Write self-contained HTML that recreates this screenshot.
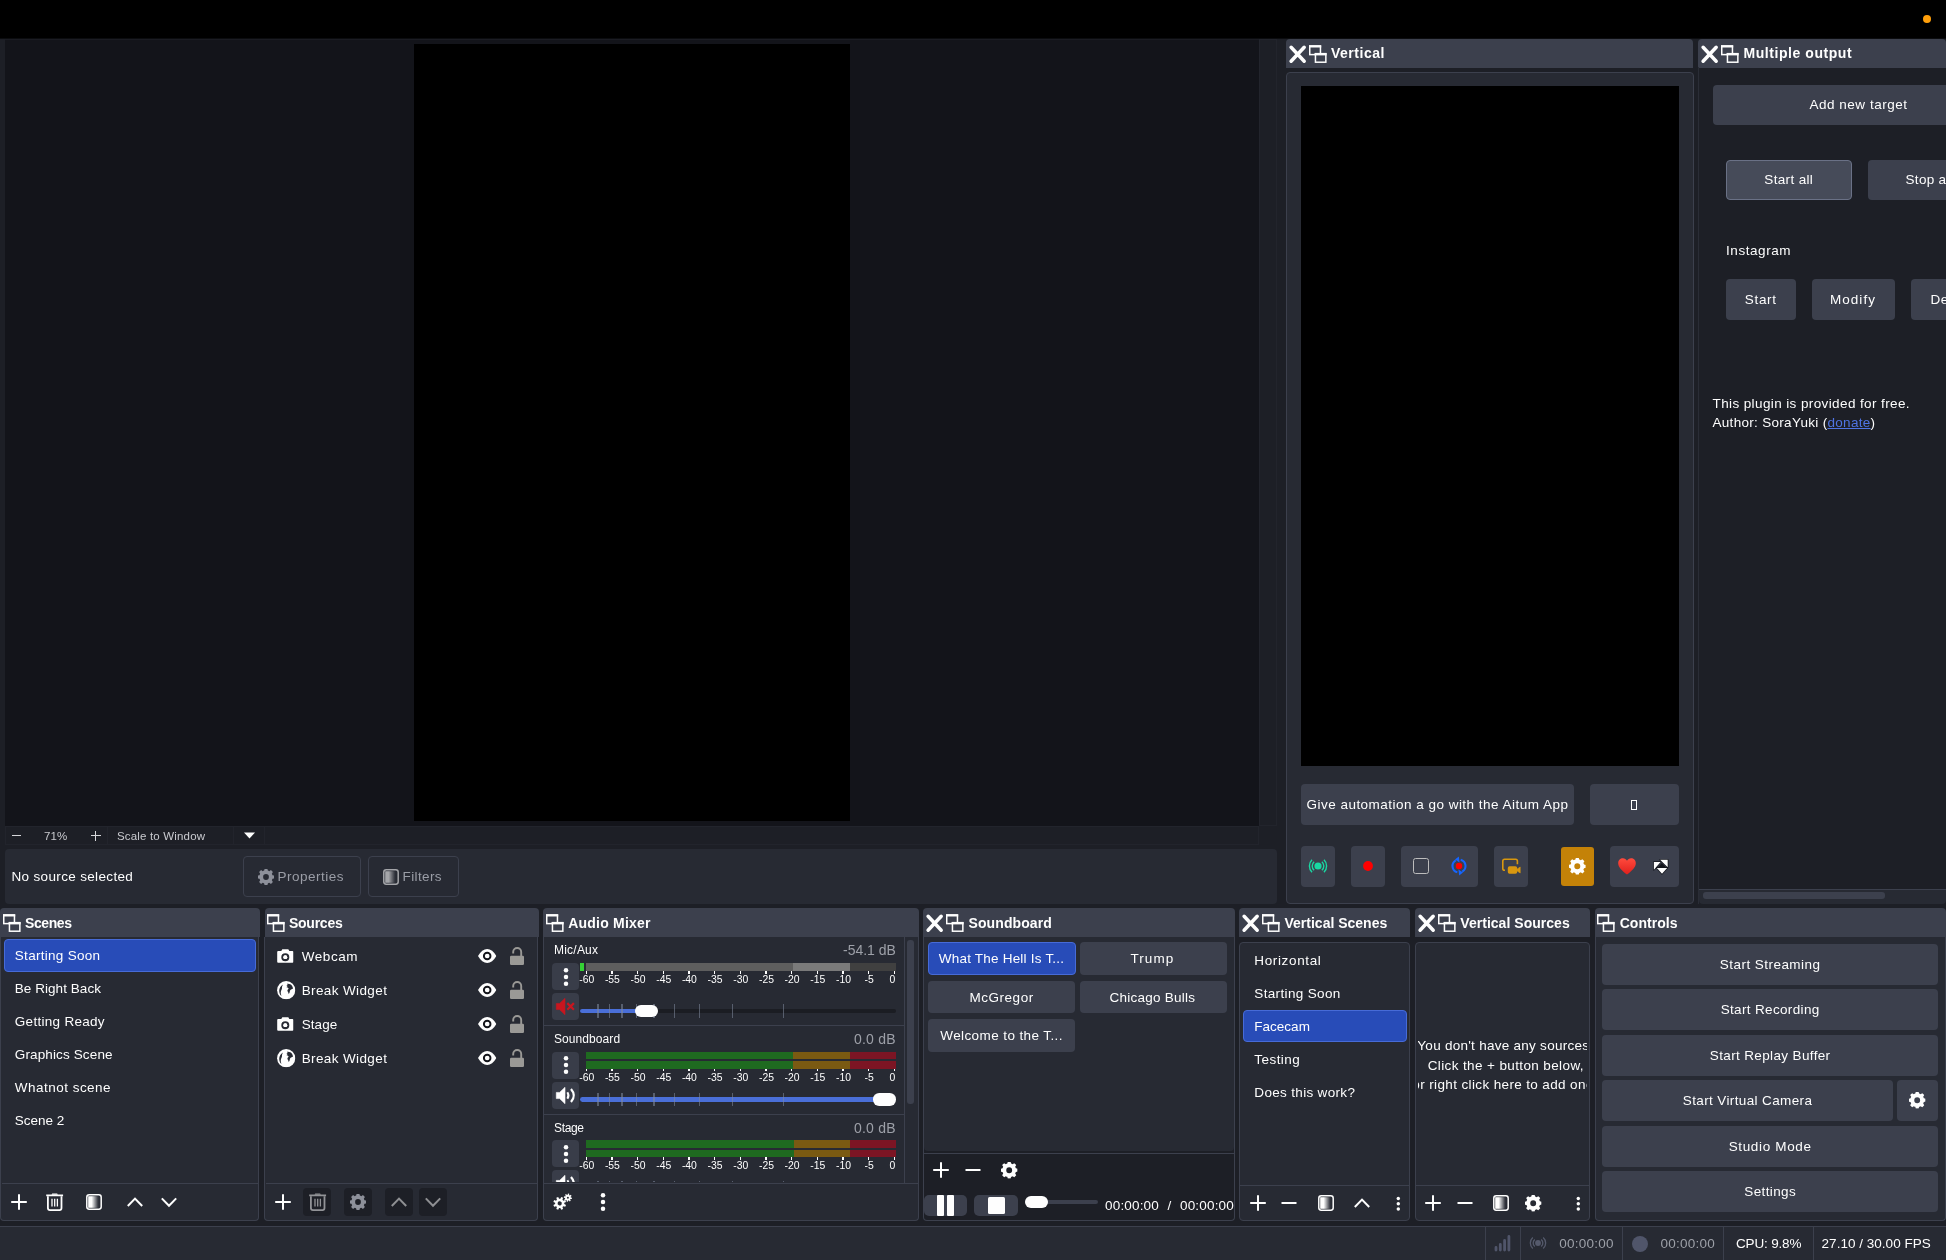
<!DOCTYPE html>
<html lang="en">
<head>
<meta charset="utf-8">
<title>OBS Studio</title>
<style>
*{box-sizing:border-box;margin:0;padding:0}
html,body{width:1946px;height:1260px;overflow:hidden;background:#1d1f26}
body{position:relative;font-family:"Liberation Sans","DejaVu Sans",sans-serif;font-size:13.5px;color:#fefefe;letter-spacing:.2px;-webkit-font-smoothing:antialiased}
.a{position:absolute}
.t{will-change:opacity;position:absolute;white-space:nowrap;line-height:20px;height:20px}
.title{position:absolute;background:#3c404d;border-radius:4px 4px 0 0;height:28.5px}
.title .t{font-weight:bold;top:4px;font-size:14px;letter-spacing:.45px}
.frame{position:absolute;background:#272a33;border:1px solid #3c404d}
.btn{position:absolute;background:#3c404d;border-radius:4px;text-align:center;white-space:nowrap}
.sel{position:absolute;background:#284cb8;border:1px solid #476bd7;border-radius:4px}
.hl{position:absolute;height:1px;background:#3c404d}
.vl{position:absolute;width:1px;background:#3c404d}
svg{position:absolute;overflow:visible}
.ic{fill:#fefefe}
.grey{color:#9da0a8}
</style>
</head>
<body>
<svg width="0" height="0" style="position:absolute">
<defs>
<symbol id="float" viewBox="0 -0.2 18 18">
 <rect x="0.75" y="0.9" width="10.7" height="8.5" fill="none" stroke="#fefefe" stroke-width="1.5"/>
 <rect x="0" y="0" width="12.2" height="2.3" fill="#fefefe"/>
 <rect x="6.45" y="8.6" width="10.4" height="8.4" fill="#3c404d" stroke="#fefefe" stroke-width="1.5"/>
 <rect x="5.7" y="7.7" width="11.9" height="2.5" fill="#fefefe"/>
</symbol>
<symbol id="close" viewBox="0 0 17 18" overflow="visible">
 <path d="M2.1 2.3L15.2 16.2M15.2 2.3L2.1 16.2" stroke="#fefefe" stroke-width="3.5" stroke-linecap="round" fill="none"/>
</symbol>
<symbol id="plus" viewBox="0 0 16 16"><path d="M8 0.2V15.8M0.2 8H15.8" stroke="#fefefe" stroke-width="2" fill="none"/></symbol>
<symbol id="minus" viewBox="0 0 16 16"><path d="M0.5 8H15.5" stroke="#fefefe" stroke-width="2" fill="none"/></symbol>
<symbol id="up" viewBox="0 0 16 16"><path d="M0.8 12L8 4.6L15.2 12" stroke="#fefefe" stroke-width="2" fill="none"/></symbol>
<symbol id="down" viewBox="0 0 16 16"><path d="M0.8 4.4L8 11.8L15.2 4.4" stroke="#fefefe" stroke-width="2" fill="none"/></symbol>
<symbol id="kebab" viewBox="0 0 4 16"><circle cx="2" cy="2.6" r="1.7" fill="#fefefe"/><circle cx="2" cy="8" r="1.7" fill="#fefefe"/><circle cx="2" cy="13.4" r="1.7" fill="#fefefe"/></symbol>
<symbol id="trash" viewBox="0 0 17.4 18">
 <path d="M0.2 2.4H17.2" stroke="#fefefe" stroke-width="1.7" fill="none"/>
 <path d="M5.6 1.8L6.2 0.5H11.2L11.8 1.8Z" fill="#fefefe"/>
 <path d="M1.9 3.2V15Q1.9 17.1 4 17.1H13.4Q15.5 17.1 15.5 15V3.2" stroke="#fefefe" stroke-width="1.8" fill="none"/>
 <path d="M6 5.8V13.4M8.7 5.8V13.4M11.4 5.8V13.4" stroke="#fefefe" stroke-width="1.3" fill="none"/>
</symbol>
<linearGradient id="fg" x1="0" x2="1" y1="0" y2="0"><stop offset="0" stop-color="#fefefe"/><stop offset="0.3" stop-color="#fefefe"/><stop offset="0.85" stop-color="#fefefe" stop-opacity="0.05"/><stop offset="1" stop-color="#fefefe" stop-opacity="0"/></linearGradient>
<symbol id="filter" viewBox="0 0 16 16">
 <rect x="2.2" y="2.2" width="11.6" height="11.6" fill="url(#fg)"/>
 <rect x="0.8" y="0.8" width="14.4" height="14.4" rx="2.4" fill="none" stroke="#fefefe" stroke-width="1.5"/>
</symbol>
<symbol id="gear" viewBox="-10 -10 20 20">
 <path fill-rule="evenodd" d="M-1.7 -9.6H1.7L2.3 -7.2A7.4 7.4 0 0 1 4.1 -6.4L6.2 -7.7L8.6 -5.3L7.3 -3.2A7.4 7.4 0 0 1 8.1 -1.4L10.5 -0.8V2.6L8.1 3.2A7.4 7.4 0 0 1 7.3 5L8.6 7.1L6.2 9.5L4.1 8.2A7.4 7.4 0 0 1 2.3 9L1.7 11.4H-1.7L-2.3 9A7.4 7.4 0 0 1 -4.1 8.2L-6.2 9.5L-8.6 7.1L-7.3 5A7.4 7.4 0 0 1 -8.1 3.2L-10.5 2.6V-0.8L-8.1 -1.4A7.4 7.4 0 0 1 -7.3 -3.2L-8.6 -5.3L-6.2 -7.7L-4.1 -6.4A7.4 7.4 0 0 1 -2.3 -7.2ZM0 -2.7A3.6 3.6 0 1 0 0 4.5A3.6 3.6 0 1 0 0 -2.7Z" transform="translate(0 -0.9)"/>
</symbol>
<symbol id="cam" viewBox="0 0 17 14">
 <path fill-rule="evenodd" d="M1.2 2H4.4L5.4 0.2H11.6L12.6 2H15.8Q16.8 2 16.8 3V13Q16.8 14 15.8 14H1.2Q0.2 14 0.2 13V3Q0.2 2 1.2 2ZM8.5 4.1A4.1 4.1 0 1 0 8.5 12.3A4.1 4.1 0 1 0 8.5 4.1ZM8.5 6.2A2 2 0 1 1 8.5 10.2A2 2 0 1 1 8.5 6.2Z" fill="#fefefe"/>
 <circle cx="8.5" cy="8.2" r="2" fill="#fefefe"/>
</symbol>
<symbol id="globe" viewBox="-9.2 -9.2 18.4 18.4">
 <circle r="9.1" fill="#fefefe"/>
 <path d="M-3.2 -5.6C-5.6 -4.2 -7 -1.8 -7 0.6C-7 2.8 -6.2 4.6 -4.8 5.8C-5 4.4 -5.6 3.4 -5.4 1.8C-5.2 0 -4 -0.8 -4.2 -2.4C-4.3 -3.6 -3.6 -4.6 -3.2 -5.6Z" fill="#272a33"/>
 <path d="M0.6 -6.4C2 -6.8 3.4 -6.4 4.6 -5.6C5.8 -4.6 6.6 -3.4 6.8 -1.8C6 -1.2 5 -1 4.2 -0.2C3.4 0.6 3.8 1.8 3.2 2.8C2.8 3.6 2.2 4.2 2.2 3C2.2 1.8 1.2 1.6 1.2 0.4C1.2 -0.6 2.2 -1 2.4 -2C1.6 -2.6 0.6 -2.4 0.2 -3.2C-0.2 -4.2 0.8 -4.8 1.6 -5.2C1.2 -5.6 0.8 -6 0.6 -6.4Z" fill="#272a33"/>
 <circle cx="0.4" cy="-3.4" r="0.7" fill="#fefefe"/>
</symbol>
<symbol id="eye" viewBox="-9.2 -7 18.4 14">
 <path d="M-9.2 0C-6.6 -4.6 -3.4 -7 0 -7C3.4 -7 6.6 -4.6 9.2 0C6.6 4.6 3.4 7 0 7C-3.4 7 -6.6 4.6 -9.2 0Z" fill="#fefefe"/>
 <circle r="3.3" fill="none" stroke="#14151b" stroke-width="1.9"/>
</symbol>
<symbol id="lock" viewBox="0 0 14 18">
 <rect x="0" y="8.8" width="14" height="9.2" rx="1.2" fill="#9a9996"/>
 <path d="M3.2 6.4V5A4 4 0 0 1 11.2 5V9.2" stroke="#9a9996" stroke-width="1.9" fill="none"/>
</symbol>
<symbol id="cogs" viewBox="0 0 20 16" overflow="visible">
 <path fill-rule="evenodd" d="M4.46 -1.14L6.42 -1.02L6.42 1.02L4.46 1.14L3.96 2.34L5.26 3.82L3.82 5.26L2.34 3.96L1.14 4.46L1.02 6.42L-1.02 6.42L-1.14 4.46L-2.34 3.96L-3.82 5.26L-5.26 3.82L-3.96 2.34L-4.46 1.14L-6.42 1.02L-6.42 -1.02L-4.46 -1.14L-3.96 -2.34L-5.26 -3.82L-3.82 -5.26L-2.34 -3.96L-1.14 -4.46L-1.02 -6.42L1.02 -6.42L1.14 -4.46L2.34 -3.96L3.82 -5.26L5.26 -3.82L3.96 -2.34ZM0 -2.1A2.1 2.1 0 1 0 0 2.1A2.1 2.1 0 1 0 0 -2.1Z" transform="translate(6.7 9.4) rotate(22.5)" fill="#fefefe"/>
 <path fill-rule="evenodd" d="M2.81 -0.72L4.05 -0.64L4.05 0.64L2.81 0.72L2.50 1.48L3.32 2.41L2.41 3.32L1.48 2.50L0.72 2.81L0.64 4.05L-0.64 4.05L-0.72 2.81L-1.48 2.50L-2.41 3.32L-3.32 2.41L-2.50 1.48L-2.81 0.72L-4.05 0.64L-4.05 -0.64L-2.81 -0.72L-2.50 -1.48L-3.32 -2.41L-2.41 -3.32L-1.48 -2.50L-0.72 -2.81L-0.64 -4.05L0.64 -4.05L0.72 -2.81L1.48 -2.50L2.41 -3.32L3.32 -2.41L2.50 -1.48ZM0 -1.0A1.0 1.0 0 1 0 0 1.0A1.0 1.0 0 1 0 0 -1.0Z" transform="translate(14.9 3.7) rotate(10)" fill="#fefefe"/>
</symbol>
<symbol id="spk" viewBox="0 0 20 17" overflow="visible">
 <path d="M0.3 5.4H3.6L9 0.3V16.7L3.6 11.6H0.3Z" fill="#fefefe" stroke="#fefefe" stroke-width=".6" stroke-linejoin="round"/>
 <path d="M11.4 5.2Q13.6 8.5 11.4 11.8" stroke="#fefefe" stroke-width="2" fill="none"/>
 <path d="M15 2Q20.6 8.5 15 15" stroke="#fefefe" stroke-width="2.2" fill="none"/>
</symbol>
<symbol id="mute" viewBox="0 0 20 17" overflow="visible">
 <path d="M0.3 5.4H3.6L9 0.3V16.7L3.6 11.6H0.3Z" fill="#c8161f" stroke="#c8161f" stroke-width=".6" stroke-linejoin="round"/>
 <path d="M11.3 5.1L17.9 11.7M17.9 5.1L11.3 11.7" stroke="#c8161f" stroke-width="2.2" fill="none"/>
</symbol>
<symbol id="kb" viewBox="-3 -10 6 20" overflow="visible"><circle cy="-6.85" r="2.25" fill="#fefefe"/><circle r="2.25" fill="#fefefe"/><circle cy="6.85" r="2.25" fill="#fefefe"/></symbol>
</defs>
</svg>

<!-- top black bar -->
<div class="a" style="left:0;top:0;width:1946px;height:38px;background:#000"></div>
<div class="a" style="left:0;top:38px;width:1946px;height:1px;background:#0b0c0f"></div>
<div class="a" style="left:1922.5px;top:14.5px;width:8.4px;height:8.4px;border-radius:50%;background:#ff9f0a"></div>

<!-- main preview -->
<div class="a" id="pv" style="left:5px;top:39px;width:1254px;height:787px;background:#13141a;border-top:1px solid #1b1c23"></div>
<div class="a" style="left:414px;top:44px;width:436px;height:776.6px;background:#000"></div>
<!-- preview scrollbars/status row -->
<div class="a" style="left:1259px;top:39px;width:18px;height:787px;background:#1d1f26;border:1px solid #22242c"></div>
<div class="a" style="left:5px;top:826px;width:1254px;height:19px;background:#1d1f26;border:1px solid #22242c"></div>

<!-- preview zoom bar -->
<div class="vl" style="left:107px;top:827px;height:17px;background:#22242c"></div>
<div class="vl" style="left:233px;top:827px;height:17px;background:#22242c"></div>
<div class="vl" style="left:264px;top:827px;height:17px;background:#22242c"></div>
<div class="a" style="left:11.5px;top:835px;width:9px;height:1.4px;background:#d6d7da"></div>
<div class="t" style="left:44px;top:826px;font-size:11.5px;color:#c9cacf;letter-spacing:.1px">71%</div>
<div class="a" style="left:90.5px;top:835px;width:10px;height:1.4px;background:#d6d7da"></div>
<div class="a" style="left:94.8px;top:830.7px;width:1.4px;height:10px;background:#d6d7da"></div>
<div class="t" style="left:117px;top:826px;font-size:11.5px;color:#c9cacf;letter-spacing:0.17px">Scale to Window</div>
<svg style="left:244px;top:832px" width="11" height="7" viewBox="0 0 11 7"><path d="M0 0.4H11L5.5 6.6Z" fill="#fefefe"/></svg>

<!-- context bar -->
<div class="a" style="left:5px;top:849px;width:1272px;height:55px;background:#272a33;border-radius:4px"></div>
<div class="t" style="left:11.5px;top:866.5px;letter-spacing:0.34px">No source selected</div>
<div class="a" style="left:243px;top:856px;width:117.5px;height:40.5px;border:1px solid #3c404d;border-radius:4px"></div>
<svg style="left:257.5px;top:868.5px" width="16" height="16"><use href="#gear" fill="#8d909a"/></svg>
<div class="t" style="left:277.5px;top:866.5px;color:#9a9da6;letter-spacing:0.51px">Properties</div>
<div class="a" style="left:367.5px;top:856px;width:91px;height:40.5px;border:1px solid #3c404d;border-radius:4px"></div>
<svg style="left:383px;top:868.5px;opacity:.58" width="16" height="16"><use href="#filter"/></svg>
<div class="t" style="left:402.5px;top:866.5px;color:#9a9da6;letter-spacing:0.39px">Filters</div>

<!-- Vertical dock -->
<div class="title" style="left:1286px;top:39px;width:407px"></div>
<svg style="left:1289px;top:45px" width="17" height="18"><use href="#close"/></svg>
<svg style="left:1309px;top:45px" width="18" height="18"><use href="#float"/></svg>
<div class="title" style="left:1331px;top:39px;width:100px;background:none"><div class="t" style="left:0;letter-spacing:0.51px">Vertical</div></div>
<div class="frame" style="left:1286px;top:72px;width:407.5px;height:832px;border-radius:4px"></div>
<div class="a" style="left:1301px;top:85.5px;width:378px;height:680.5px;background:#000"></div>
<div class="btn" style="left:1301px;top:784px;width:273px;height:41px"><div class="t" style="left:5.5px;top:10.5px;letter-spacing:0.48px">Give automation a go with the Aitum App</div></div>
<div class="btn" style="left:1589.5px;top:784px;width:89.5px;height:41px"><div class="a" style="left:41.5px;top:15.5px;width:6px;height:10px;border:1px solid #fefefe"></div></div>
<div class="btn" style="left:1301px;top:845.5px;width:34px;height:41px"></div>
<div class="btn" style="left:1351px;top:845.5px;width:34px;height:41px"></div>
<div class="btn" style="left:1401px;top:845.5px;width:77px;height:41px"></div>
<div class="btn" style="left:1494px;top:845.5px;width:34px;height:41px"></div>
<div class="btn" style="left:1561px;top:847px;width:32.5px;height:38.5px;background:#c48208;border-radius:3px"></div>
<div class="btn" style="left:1610px;top:845.5px;width:69px;height:41px"></div>
<svg style="left:1317.9px;top:866.2px" width="1" height="1"><circle r="3.6" fill="#19d8a2"/><path d="M3.88 -4.31A5.8 5.8 0 0 1 3.88 4.31M5.97 -6.19A8.6 8.6 0 0 1 5.97 6.19M-3.88 4.31A5.8 5.8 0 0 1 -3.88 -4.31M-5.97 6.19A8.6 8.6 0 0 1 -5.97 -6.19" stroke="#19d8a2" stroke-width="1.4" fill="none"/></svg>
<svg style="left:1368px;top:866.2px" width="1" height="1"><circle r="4.9" fill="#ff0000"/></svg>
<div class="a" style="left:1413.2px;top:858px;width:16px;height:16.2px;border:1.4px solid #bdbdbd;border-radius:2.6px"></div>
<svg style="left:1458.9px;top:866.2px" width="1" height="1"><circle r="3.2" fill="#ff0000"/><path d="M1.68 -6.28A6.5 6.5 0 0 1 3.25 5.63M-1.68 6.28A6.5 6.5 0 0 1 -3.25 -5.63" stroke="#1565ff" stroke-width="2.1" fill="none"/><path d="M-0.2 -9.4L-4 -6.4L0.6 -3.6Z" fill="#1565ff"/><path d="M0.2 9.4L4 6.4L-0.6 3.6Z" fill="#1565ff"/></svg>
<svg style="left:1500px;top:856px" width="22" height="20" viewBox="0 0 22 20"><path d="M5 14.2H4.6Q2.8 14.2 2.8 12.4V5Q2.8 3.2 4.6 3.2H15.6Q17.4 3.2 17.4 5V8.2" stroke="#d8970f" stroke-width="1.6" fill="none"/><rect x="7.8" y="10.2" width="9.4" height="7.6" rx="1.8" fill="#d8970f"/><path d="M17 13.2L20.2 11V17L17 14.8Z" fill="#d8970f" stroke="#d8970f" stroke-width=".6" stroke-linejoin="round"/></svg>
<svg style="left:1568.9px;top:857.7px" width="16.6" height="16.6"><use href="#gear" fill="#fefefe"/></svg>
<svg style="left:1618.3px;top:857.8px" width="18" height="17" viewBox="0 0 18 17"><defs><linearGradient id="hg" x1="0" y1="0" x2="0" y2="1"><stop offset="0" stop-color="#ff4a3d"/><stop offset="1" stop-color="#e0201c"/></linearGradient></defs><path d="M9 16.6C4 12.6 0.2 9.2 0.2 5.2C0.2 2.2 2.4 0.3 4.9 0.3C6.7 0.3 8.2 1.3 9 2.8C9.8 1.3 11.3 0.3 13.1 0.3C15.6 0.3 17.8 2.2 17.8 5.2C17.8 9.2 14 12.6 9 16.6Z" fill="url(#hg)"/></svg>
<svg style="left:1652px;top:858px" width="18" height="18" viewBox="0 0 18 18"><g stroke="#15171e" stroke-width="1.6" stroke-linejoin="round" paint-order="stroke"><path d="M1.9 4H8.6L1.9 11.8Z" fill="#fefefe"/><path d="M8.1 1.8H15.7V9.3Z" fill="#fefefe"/><path d="M4.8 9.9H15.2L10 15.8Z" fill="#fefefe"/></g><path d="M5.9 9.3H13.9L9.9 5.1Z" fill="#12141b"/></svg>


<!-- Multiple output dock -->
<div class="title" style="left:1698px;top:39px;width:248px"></div>
<svg style="left:1701px;top:45px" width="17" height="18"><use href="#close"/></svg>
<svg style="left:1721px;top:45px" width="18" height="18"><use href="#float"/></svg>
<div class="title" style="left:1743.5px;top:39px;width:150px;background:none"><div class="t" style="left:0;letter-spacing:0.56px">Multiple output</div></div>
<div class="vl" style="left:1698px;top:67px;height:837px;background:#2a2d36"></div>
<div class="btn" style="left:1713px;top:84.5px;width:291px;height:40.5px"><div class="t" style="left:0;width:291px;top:10.5px;letter-spacing:0.51px">Add new target</div></div>
<div class="btn" style="left:1726px;top:159.5px;width:125.5px;height:40.5px;background:#464b59;border:1px solid #6a7186"><div class="t" style="left:0;width:123.5px;top:9.5px;letter-spacing:0.35px">Start all</div></div>
<div class="btn" style="left:1867.5px;top:159.5px;width:125.5px;height:40.5px"><div class="t" style="left:-1px;width:125.5px;top:10.5px;letter-spacing:.3px">Stop all</div></div>
<div class="t" style="left:1726px;top:241px;letter-spacing:0.56px">Instagram</div>
<div class="btn" style="left:1726px;top:279px;width:69.5px;height:41px"><div class="t" style="left:0;width:69.5px;top:10.5px;letter-spacing:0.70px">Start</div></div>
<div class="btn" style="left:1811.5px;top:279px;width:83px;height:41px"><div class="t" style="left:0;width:83px;top:10.5px;letter-spacing:1.01px">Modify</div></div>
<div class="btn" style="left:1911px;top:279px;width:80px;height:41px"><div class="t" style="left:0;width:80px;top:10.5px;letter-spacing:.3px">Delete</div></div>
<div class="t" style="left:1712.5px;top:393.5px;letter-spacing:0.39px">This plugin is provided for free.</div>
<div class="t" style="left:1712.5px;top:412.8px;letter-spacing:.3px">Author: SoraYuki (<span style="color:#4f74e3;text-decoration:underline">donate</span>)</div>
<div class="a" style="left:1699px;top:889px;width:247px;height:15px;background:#272a33;border-top:1px solid #3c404d;border-radius:0 0 4px 4px"></div>
<div class="a" style="left:1702.5px;top:892px;width:182px;height:7px;background:#3c404d;border-radius:3px"></div>

<!-- Scenes dock -->
<div class="title" style="left:0;top:908px;width:260px"><div class="t" style="top:4.6px;left:25px;letter-spacing:-0.41px">Scenes</div></div>
<svg style="left:2.5px;top:914px" width="18" height="18"><use href="#float"/></svg>
<div class="frame" style="left:0.3px;top:936.5px;width:258.9px;height:284.5px;border-top:none;border-radius:0 0 4px 4px"></div>
<div class="sel" style="left:3.5px;top:939px;width:252.5px;height:33px"></div>
<div class="t" style="left:14.8px;top:946.3px;letter-spacing:0.29px">Starting Soon</div>
<div class="t" style="left:14.8px;top:979.3px;letter-spacing:0.05px">Be Right Back</div>
<div class="t" style="left:14.8px;top:1012.3px;letter-spacing:0.29px">Getting Ready</div>
<div class="t" style="left:14.8px;top:1045.3px;letter-spacing:0.13px">Graphics Scene</div>
<div class="t" style="left:14.8px;top:1078.3px;letter-spacing:0.48px">Whatnot scene</div>
<div class="t" style="left:14.8px;top:1111.3px;letter-spacing:-0.01px">Scene 2</div>
<div class="hl" style="left:2px;top:1183px;width:256.5px"></div>
<svg style="left:11.4px;top:1194.3px" width="16" height="16"><use href="#plus"/></svg>
<svg style="left:45.5px;top:1193px" width="17.4" height="18"><use href="#trash"/></svg>
<svg style="left:86px;top:1194.3px" width="16" height="16"><use href="#filter"/></svg>
<svg style="left:127px;top:1194.3px" width="16" height="16"><use href="#up"/></svg>
<svg style="left:161px;top:1194.3px" width="16" height="16"><use href="#down"/></svg>

<!-- Sources dock -->
<div class="title" style="left:264.5px;top:908px;width:274px"><div class="t" style="top:4.6px;left:24.5px;letter-spacing:-0.26px">Sources</div></div>
<svg style="left:266.7px;top:914px" width="18" height="18"><use href="#float"/></svg>
<div class="frame" style="left:263.9px;top:936.5px;width:274.5px;height:284.5px;border-top:none;border-radius:0 0 4px 4px"></div>
<svg style="left:277.4px;top:949.0px" width="16.6" height="14"><use href="#cam"/></svg>
<div class="t" style="left:301.7px;top:946.5px;letter-spacing:0.57px">Webcam</div>
<svg style="left:477.8px;top:949.0px" width="18.4" height="14"><use href="#eye"/></svg>
<svg style="left:509.7px;top:947.0px" width="14" height="18"><use href="#lock"/></svg>
<svg style="left:276.5px;top:981.0px" width="18.4" height="18.4"><use href="#globe"/></svg>
<div class="t" style="left:301.7px;top:980.5px;letter-spacing:0.38px">Break Widget</div>
<svg style="left:477.8px;top:983.0px" width="18.4" height="14"><use href="#eye"/></svg>
<svg style="left:509.7px;top:981.0px" width="14" height="18"><use href="#lock"/></svg>
<svg style="left:277.4px;top:1017.1px" width="16.6" height="14"><use href="#cam"/></svg>
<div class="t" style="left:301.7px;top:1014.6px;letter-spacing:0.08px">Stage</div>
<svg style="left:477.8px;top:1017.1px" width="18.4" height="14"><use href="#eye"/></svg>
<svg style="left:509.7px;top:1015.1px" width="14" height="18"><use href="#lock"/></svg>
<svg style="left:276.5px;top:1049.1px" width="18.4" height="18.4"><use href="#globe"/></svg>
<div class="t" style="left:301.7px;top:1048.7px;letter-spacing:0.38px">Break Widget</div>
<svg style="left:477.8px;top:1051.2px" width="18.4" height="14"><use href="#eye"/></svg>
<svg style="left:509.7px;top:1049.2px" width="14" height="18"><use href="#lock"/></svg>
<div class="hl" style="left:265.5px;top:1183px;width:272px"></div>
<svg style="left:274.9px;top:1194.3px" width="16" height="16"><use href="#plus"/></svg>
<div class="a" style="left:303.4px;top:1188px;width:28px;height:28px;background:#1d1f26;border-radius:4px"></div>
<div class="a" style="left:344.3px;top:1188px;width:28px;height:28px;background:#1d1f26;border-radius:4px"></div>
<div class="a" style="left:385.2px;top:1188px;width:28px;height:28px;background:#1d1f26;border-radius:4px"></div>
<div class="a" style="left:419.3px;top:1188px;width:28px;height:28px;background:#1d1f26;border-radius:4px"></div>
<svg style="left:309.3px;top:1193px;opacity:.52" width="17.4" height="18"><use href="#trash"/></svg>
<svg style="left:350.3px;top:1194px" width="16" height="16"><use href="#gear" fill="#8d909a"/></svg>
<svg style="left:391.2px;top:1194.3px;opacity:.5" width="16" height="16"><use href="#up"/></svg>
<svg style="left:425.3px;top:1194.3px;opacity:.5" width="16" height="16"><use href="#down"/></svg>

<!-- Audio Mixer dock -->
<div class="title" style="left:543px;top:908px;width:375.5px"><div class="t" style="top:4.6px;left:25.3px;letter-spacing:0.20px">Audio Mixer</div></div>
<svg style="left:545.5px;top:914px" width="18" height="18"><use href="#float"/></svg>
<div class="frame" style="left:543px;top:936.5px;width:375.5px;height:284.5px;border-top:none;border-radius:0 0 4px 4px"></div>
<div class="a" style="left:544px;top:937px;width:373.5px;height:244.8px;overflow:hidden">
<div class="t" style="left:10px;top:3.4px;font-size:12px;letter-spacing:0.22px">Mic/Aux</div>
<div class="t grey" style="right:21.7px;top:3.4px;font-size:14px;letter-spacing:-0.02px">-54.1 dB</div>
<div class="a" style="left:8px;top:26.0px;width:27px;height:27px;background:#393d49;border-radius:4px"></div>
<svg style="left:18.5px;top:29.6px" width="6" height="20"><use href="#kb"/></svg>
<div class="a" style="left:36px;top:26.0px;width:4.2px;height:8px;background:#35d135"></div>
<div class="a" style="left:41.8px;top:26.0px;width:310px;height:8px;background:linear-gradient(90deg,#5e5e5e 0,#5e5e5e 207.5px,#7a7a7a 207.5px,#7a7a7a 264.4px,#404040 264.4px)"></div>
<div class="a" style="left:41.6px;top:34.0px;width:1.4px;height:2.6px;background:#fefefe"></div>
<div class="t" style="left:22.7px;width:40px;text-align:center;top:33.1px;font-size:10.4px;letter-spacing:0">-60</div>
<div class="a" style="left:67.3px;top:34.0px;width:1.4px;height:2.6px;background:#fefefe"></div>
<div class="t" style="left:48.4px;width:40px;text-align:center;top:33.1px;font-size:10.4px;letter-spacing:0">-55</div>
<div class="a" style="left:93.0px;top:34.0px;width:1.4px;height:2.6px;background:#fefefe"></div>
<div class="t" style="left:74.1px;width:40px;text-align:center;top:33.1px;font-size:10.4px;letter-spacing:0">-50</div>
<div class="a" style="left:118.6px;top:34.0px;width:1.4px;height:2.6px;background:#fefefe"></div>
<div class="t" style="left:99.7px;width:40px;text-align:center;top:33.1px;font-size:10.4px;letter-spacing:0">-45</div>
<div class="a" style="left:144.3px;top:34.0px;width:1.4px;height:2.6px;background:#fefefe"></div>
<div class="t" style="left:125.4px;width:40px;text-align:center;top:33.1px;font-size:10.4px;letter-spacing:0">-40</div>
<div class="a" style="left:170.0px;top:34.0px;width:1.4px;height:2.6px;background:#fefefe"></div>
<div class="t" style="left:151.1px;width:40px;text-align:center;top:33.1px;font-size:10.4px;letter-spacing:0">-35</div>
<div class="a" style="left:195.7px;top:34.0px;width:1.4px;height:2.6px;background:#fefefe"></div>
<div class="t" style="left:176.8px;width:40px;text-align:center;top:33.1px;font-size:10.4px;letter-spacing:0">-30</div>
<div class="a" style="left:221.4px;top:34.0px;width:1.4px;height:2.6px;background:#fefefe"></div>
<div class="t" style="left:202.5px;width:40px;text-align:center;top:33.1px;font-size:10.4px;letter-spacing:0">-25</div>
<div class="a" style="left:247.0px;top:34.0px;width:1.4px;height:2.6px;background:#fefefe"></div>
<div class="t" style="left:228.1px;width:40px;text-align:center;top:33.1px;font-size:10.4px;letter-spacing:0">-20</div>
<div class="a" style="left:272.7px;top:34.0px;width:1.4px;height:2.6px;background:#fefefe"></div>
<div class="t" style="left:253.8px;width:40px;text-align:center;top:33.1px;font-size:10.4px;letter-spacing:0">-15</div>
<div class="a" style="left:298.4px;top:34.0px;width:1.4px;height:2.6px;background:#fefefe"></div>
<div class="t" style="left:279.5px;width:40px;text-align:center;top:33.1px;font-size:10.4px;letter-spacing:0">-10</div>
<div class="a" style="left:324.1px;top:34.0px;width:1.4px;height:2.6px;background:#fefefe"></div>
<div class="t" style="left:305.2px;width:40px;text-align:center;top:33.1px;font-size:10.4px;letter-spacing:0">-5</div>
<div class="a" style="left:349.8px;top:34.0px;width:1.4px;height:2.6px;background:#fefefe"></div>
<div class="t" style="left:328.5px;width:40px;text-align:center;top:33.1px;font-size:10.4px;letter-spacing:0">0</div>
<div class="a" style="left:8px;top:55.8px;width:27px;height:27px;background:#393d49;border-radius:4px"></div>
<svg style="left:12px;top:60.8px" width="20" height="17"><use href="#mute"/></svg>
<div class="a" style="left:36.3px;top:71.5px;width:315.5px;height:4.8px;border-radius:2.4px;background:#1b1d23"></div>
<div class="a" style="left:36.3px;top:71.5px;width:66.3px;height:4.8px;border-radius:2.4px;background:#4a6fd8"></div>
<div class="a" style="left:53.2px;top:67.0px;width:1.5px;height:13.6px;background:rgba(130,138,158,.55)"></div>
<div class="a" style="left:64.9px;top:67.0px;width:1.5px;height:13.6px;background:rgba(130,138,158,.55)"></div>
<div class="a" style="left:77.2px;top:67.0px;width:1.5px;height:13.6px;background:rgba(130,138,158,.55)"></div>
<div class="a" style="left:91.9px;top:67.0px;width:1.5px;height:13.6px;background:rgba(130,138,158,.55)"></div>
<div class="a" style="left:109.0px;top:67.0px;width:1.5px;height:13.6px;background:rgba(130,138,158,.55)"></div>
<div class="a" style="left:129.6px;top:67.0px;width:1.5px;height:13.6px;background:rgba(130,138,158,.55)"></div>
<div class="a" style="left:154.9px;top:67.0px;width:1.5px;height:13.6px;background:rgba(130,138,158,.55)"></div>
<div class="a" style="left:187.6px;top:67.0px;width:1.5px;height:13.6px;background:rgba(130,138,158,.55)"></div>
<div class="a" style="left:238.9px;top:67.0px;width:1.5px;height:13.6px;background:rgba(130,138,158,.55)"></div>
<div class="a" style="left:90.9px;top:67.7px;width:23.4px;height:12.3px;border-radius:6.2px;background:#fefefe"></div>
<div class="hl" style="left:0;top:87.9px;width:359.8px"></div>
<div class="t" style="left:10px;top:92.1px;font-size:12px;letter-spacing:0.08px">Soundboard</div>
<div class="t grey" style="right:21.7px;top:92.1px;font-size:14px;letter-spacing:0.24px">0.0 dB</div>
<div class="a" style="left:8px;top:114.7px;width:27px;height:27px;background:#393d49;border-radius:4px"></div>
<svg style="left:18.5px;top:118.3px" width="6" height="20"><use href="#kb"/></svg>
<div class="a" style="left:41.8px;top:114.7px;width:310px;height:7.8px;background:linear-gradient(90deg,#1f6a20 0,#1f6a20 207.5px,#7a5a12 207.5px,#7a5a12 264.4px,#7c1524 264.4px)"></div>
<div class="a" style="left:41.8px;top:123.9px;width:310px;height:7.8px;background:linear-gradient(90deg,#1f6a20 0,#1f6a20 207.5px,#7a5a12 207.5px,#7a5a12 264.4px,#7c1524 264.4px)"></div>
<div class="a" style="left:41.6px;top:131.7px;width:1.4px;height:2.6px;background:#fefefe"></div>
<div class="t" style="left:22.7px;width:40px;text-align:center;top:130.7px;font-size:10.4px;letter-spacing:0">-60</div>
<div class="a" style="left:67.3px;top:131.7px;width:1.4px;height:2.6px;background:#fefefe"></div>
<div class="t" style="left:48.4px;width:40px;text-align:center;top:130.7px;font-size:10.4px;letter-spacing:0">-55</div>
<div class="a" style="left:93.0px;top:131.7px;width:1.4px;height:2.6px;background:#fefefe"></div>
<div class="t" style="left:74.1px;width:40px;text-align:center;top:130.7px;font-size:10.4px;letter-spacing:0">-50</div>
<div class="a" style="left:118.6px;top:131.7px;width:1.4px;height:2.6px;background:#fefefe"></div>
<div class="t" style="left:99.7px;width:40px;text-align:center;top:130.7px;font-size:10.4px;letter-spacing:0">-45</div>
<div class="a" style="left:144.3px;top:131.7px;width:1.4px;height:2.6px;background:#fefefe"></div>
<div class="t" style="left:125.4px;width:40px;text-align:center;top:130.7px;font-size:10.4px;letter-spacing:0">-40</div>
<div class="a" style="left:170.0px;top:131.7px;width:1.4px;height:2.6px;background:#fefefe"></div>
<div class="t" style="left:151.1px;width:40px;text-align:center;top:130.7px;font-size:10.4px;letter-spacing:0">-35</div>
<div class="a" style="left:195.7px;top:131.7px;width:1.4px;height:2.6px;background:#fefefe"></div>
<div class="t" style="left:176.8px;width:40px;text-align:center;top:130.7px;font-size:10.4px;letter-spacing:0">-30</div>
<div class="a" style="left:221.4px;top:131.7px;width:1.4px;height:2.6px;background:#fefefe"></div>
<div class="t" style="left:202.5px;width:40px;text-align:center;top:130.7px;font-size:10.4px;letter-spacing:0">-25</div>
<div class="a" style="left:247.0px;top:131.7px;width:1.4px;height:2.6px;background:#fefefe"></div>
<div class="t" style="left:228.1px;width:40px;text-align:center;top:130.7px;font-size:10.4px;letter-spacing:0">-20</div>
<div class="a" style="left:272.7px;top:131.7px;width:1.4px;height:2.6px;background:#fefefe"></div>
<div class="t" style="left:253.8px;width:40px;text-align:center;top:130.7px;font-size:10.4px;letter-spacing:0">-15</div>
<div class="a" style="left:298.4px;top:131.7px;width:1.4px;height:2.6px;background:#fefefe"></div>
<div class="t" style="left:279.5px;width:40px;text-align:center;top:130.7px;font-size:10.4px;letter-spacing:0">-10</div>
<div class="a" style="left:324.1px;top:131.7px;width:1.4px;height:2.6px;background:#fefefe"></div>
<div class="t" style="left:305.2px;width:40px;text-align:center;top:130.7px;font-size:10.4px;letter-spacing:0">-5</div>
<div class="a" style="left:349.8px;top:131.7px;width:1.4px;height:2.6px;background:#fefefe"></div>
<div class="t" style="left:328.5px;width:40px;text-align:center;top:130.7px;font-size:10.4px;letter-spacing:0">0</div>
<div class="a" style="left:8px;top:144.5px;width:27px;height:27px;background:#393d49;border-radius:4px"></div>
<svg style="left:12px;top:149.5px" width="20" height="17"><use href="#spk"/></svg>
<div class="a" style="left:36.3px;top:160.2px;width:315.5px;height:4.8px;border-radius:2.4px;background:#1b1d23"></div>
<div class="a" style="left:36.3px;top:160.2px;width:304.1px;height:4.8px;border-radius:2.4px;background:#4a6fd8"></div>
<div class="a" style="left:53.2px;top:155.7px;width:1.5px;height:13.6px;background:rgba(130,138,158,.55)"></div>
<div class="a" style="left:64.9px;top:155.7px;width:1.5px;height:13.6px;background:rgba(130,138,158,.55)"></div>
<div class="a" style="left:77.2px;top:155.7px;width:1.5px;height:13.6px;background:rgba(130,138,158,.55)"></div>
<div class="a" style="left:91.9px;top:155.7px;width:1.5px;height:13.6px;background:rgba(130,138,158,.55)"></div>
<div class="a" style="left:109.0px;top:155.7px;width:1.5px;height:13.6px;background:rgba(130,138,158,.55)"></div>
<div class="a" style="left:129.6px;top:155.7px;width:1.5px;height:13.6px;background:rgba(130,138,158,.55)"></div>
<div class="a" style="left:154.9px;top:155.7px;width:1.5px;height:13.6px;background:rgba(130,138,158,.55)"></div>
<div class="a" style="left:187.6px;top:155.7px;width:1.5px;height:13.6px;background:rgba(130,138,158,.55)"></div>
<div class="a" style="left:238.9px;top:155.7px;width:1.5px;height:13.6px;background:rgba(130,138,158,.55)"></div>
<div class="a" style="left:328.7px;top:156.4px;width:23.4px;height:12.3px;border-radius:6.2px;background:#fefefe"></div>
<div class="hl" style="left:0;top:176.6px;width:359.8px"></div>
<div class="t" style="left:10px;top:180.8px;font-size:12px;letter-spacing:-0.34px">Stage</div>
<div class="t grey" style="right:21.7px;top:180.8px;font-size:14px;letter-spacing:0.24px">0.0 dB</div>
<div class="a" style="left:8px;top:203.4px;width:27px;height:27px;background:#393d49;border-radius:4px"></div>
<svg style="left:18.5px;top:207.0px" width="6" height="20"><use href="#kb"/></svg>
<div class="a" style="left:41.8px;top:203.4px;width:310px;height:7.8px;background:linear-gradient(90deg,#1f6a20 0,#1f6a20 207.5px,#7a5a12 207.5px,#7a5a12 264.4px,#7c1524 264.4px)"></div>
<div class="a" style="left:41.8px;top:212.6px;width:310px;height:7.8px;background:linear-gradient(90deg,#1f6a20 0,#1f6a20 207.5px,#7a5a12 207.5px,#7a5a12 264.4px,#7c1524 264.4px)"></div>
<div class="a" style="left:41.6px;top:220.4px;width:1.4px;height:2.6px;background:#fefefe"></div>
<div class="t" style="left:22.7px;width:40px;text-align:center;top:219.4px;font-size:10.4px;letter-spacing:0">-60</div>
<div class="a" style="left:67.3px;top:220.4px;width:1.4px;height:2.6px;background:#fefefe"></div>
<div class="t" style="left:48.4px;width:40px;text-align:center;top:219.4px;font-size:10.4px;letter-spacing:0">-55</div>
<div class="a" style="left:93.0px;top:220.4px;width:1.4px;height:2.6px;background:#fefefe"></div>
<div class="t" style="left:74.1px;width:40px;text-align:center;top:219.4px;font-size:10.4px;letter-spacing:0">-50</div>
<div class="a" style="left:118.6px;top:220.4px;width:1.4px;height:2.6px;background:#fefefe"></div>
<div class="t" style="left:99.7px;width:40px;text-align:center;top:219.4px;font-size:10.4px;letter-spacing:0">-45</div>
<div class="a" style="left:144.3px;top:220.4px;width:1.4px;height:2.6px;background:#fefefe"></div>
<div class="t" style="left:125.4px;width:40px;text-align:center;top:219.4px;font-size:10.4px;letter-spacing:0">-40</div>
<div class="a" style="left:170.0px;top:220.4px;width:1.4px;height:2.6px;background:#fefefe"></div>
<div class="t" style="left:151.1px;width:40px;text-align:center;top:219.4px;font-size:10.4px;letter-spacing:0">-35</div>
<div class="a" style="left:195.7px;top:220.4px;width:1.4px;height:2.6px;background:#fefefe"></div>
<div class="t" style="left:176.8px;width:40px;text-align:center;top:219.4px;font-size:10.4px;letter-spacing:0">-30</div>
<div class="a" style="left:221.4px;top:220.4px;width:1.4px;height:2.6px;background:#fefefe"></div>
<div class="t" style="left:202.5px;width:40px;text-align:center;top:219.4px;font-size:10.4px;letter-spacing:0">-25</div>
<div class="a" style="left:247.0px;top:220.4px;width:1.4px;height:2.6px;background:#fefefe"></div>
<div class="t" style="left:228.1px;width:40px;text-align:center;top:219.4px;font-size:10.4px;letter-spacing:0">-20</div>
<div class="a" style="left:272.7px;top:220.4px;width:1.4px;height:2.6px;background:#fefefe"></div>
<div class="t" style="left:253.8px;width:40px;text-align:center;top:219.4px;font-size:10.4px;letter-spacing:0">-15</div>
<div class="a" style="left:298.4px;top:220.4px;width:1.4px;height:2.6px;background:#fefefe"></div>
<div class="t" style="left:279.5px;width:40px;text-align:center;top:219.4px;font-size:10.4px;letter-spacing:0">-10</div>
<div class="a" style="left:324.1px;top:220.4px;width:1.4px;height:2.6px;background:#fefefe"></div>
<div class="t" style="left:305.2px;width:40px;text-align:center;top:219.4px;font-size:10.4px;letter-spacing:0">-5</div>
<div class="a" style="left:349.8px;top:220.4px;width:1.4px;height:2.6px;background:#fefefe"></div>
<div class="t" style="left:328.5px;width:40px;text-align:center;top:219.4px;font-size:10.4px;letter-spacing:0">0</div>
<div class="a" style="left:8px;top:233.2px;width:27px;height:27px;background:#393d49;border-radius:4px"></div>
<svg style="left:12px;top:238.2px" width="20" height="17"><use href="#spk"/></svg>
<div class="a" style="left:36.3px;top:248.9px;width:315.5px;height:4.8px;border-radius:2.4px;background:#1b1d23"></div>
<div class="a" style="left:36.3px;top:248.9px;width:304.1px;height:4.8px;border-radius:2.4px;background:#4a6fd8"></div>
<div class="a" style="left:53.2px;top:244.4px;width:1.5px;height:13.6px;background:rgba(130,138,158,.55)"></div>
<div class="a" style="left:64.9px;top:244.4px;width:1.5px;height:13.6px;background:rgba(130,138,158,.55)"></div>
<div class="a" style="left:77.2px;top:244.4px;width:1.5px;height:13.6px;background:rgba(130,138,158,.55)"></div>
<div class="a" style="left:91.9px;top:244.4px;width:1.5px;height:13.6px;background:rgba(130,138,158,.55)"></div>
<div class="a" style="left:109.0px;top:244.4px;width:1.5px;height:13.6px;background:rgba(130,138,158,.55)"></div>
<div class="a" style="left:129.6px;top:244.4px;width:1.5px;height:13.6px;background:rgba(130,138,158,.55)"></div>
<div class="a" style="left:154.9px;top:244.4px;width:1.5px;height:13.6px;background:rgba(130,138,158,.55)"></div>
<div class="a" style="left:187.6px;top:244.4px;width:1.5px;height:13.6px;background:rgba(130,138,158,.55)"></div>
<div class="a" style="left:238.9px;top:244.4px;width:1.5px;height:13.6px;background:rgba(130,138,158,.55)"></div>
<div class="a" style="left:328.7px;top:245.1px;width:23.4px;height:12.3px;border-radius:6.2px;background:#fefefe"></div>
<div class="hl" style="left:0;top:265.3px;width:359.8px"></div>
</div>
<div class="vl" style="left:903.5px;top:937px;height:245.5px"></div>
<div class="a" style="left:907.4px;top:940px;width:6.5px;height:164px;background:#3c404d;border-radius:3px"></div>
<div class="hl" style="left:544px;top:1182.5px;width:373.5px"></div>
<svg style="left:552.5px;top:1194.3px" width="20" height="16"><use href="#cogs"/></svg>
<svg style="left:600.2px;top:1192px" width="6" height="20"><use href="#kb"/></svg>

<!-- Soundboard dock -->
<div class="title" style="left:923px;top:908px;width:312px"><div class="t" style="top:4.6px;left:45.5px;letter-spacing:0.10px">Soundboard</div></div>
<svg style="left:926px;top:914px" width="17" height="18"><use href="#close"/></svg>
<svg style="left:946px;top:914px" width="18" height="18"><use href="#float"/></svg>
<div class="frame" style="left:923px;top:936.5px;width:312px;height:284.5px;border-top:none;border-radius:0 0 4px 4px;background:#1d1f26"></div>
<div class="a" style="left:924px;top:937px;width:310px;height:213.5px;background:#272a33;border-radius:0 0 4px 4px"></div>
<div class="sel" style="left:927.5px;top:941.5px;width:148px;height:33.5px"><div class="t" style="left:0;width:146px;text-align:center;top:6.6px;letter-spacing:0.21px">What The Hell Is T...</div></div>
<div class="btn" style="left:1080.3px;top:942px;width:147.2px;height:32.8px"><div class="t" style="left:-1.5px;width:147.2px;top:7.3px;letter-spacing:1.02px">Trump</div></div>
<div class="btn" style="left:928px;top:980.5px;width:147.2px;height:32.8px"><div class="t" style="left:0;width:147.2px;top:7.3px;letter-spacing:0.54px">McGregor</div></div>
<div class="btn" style="left:1080.3px;top:980.5px;width:147.2px;height:32.8px"><div class="t" style="left:-1.5px;width:147.2px;top:7.3px;letter-spacing:0.23px">Chicago Bulls</div></div>
<div class="btn" style="left:928px;top:1019.2px;width:147.2px;height:32.8px"><div class="t" style="left:0;width:147.2px;top:7.3px;letter-spacing:0.40px">Welcome to the T...</div></div>
<div class="hl" style="left:924px;top:1152.5px;width:310px"></div>
<svg style="left:933px;top:1162.4px" width="16" height="16"><use href="#plus"/></svg>
<svg style="left:965px;top:1162.4px" width="16" height="16"><use href="#minus"/></svg>
<svg style="left:1001.1px;top:1162.2px" width="16.4" height="16.4"><use href="#gear" fill="#fefefe"/></svg>
<div class="btn" style="left:924.3px;top:1195.3px;width:42.7px;height:20.4px;border-radius:5px;overflow:hidden"><div class="a" style="left:12.7px;top:0;width:6.9px;height:20.4px;background:#fefefe;border-radius:1px"></div><div class="a" style="left:23px;top:0;width:7px;height:20.4px;background:#fefefe;border-radius:1px"></div></div>
<div class="btn" style="left:974px;top:1195.3px;width:44.4px;height:20.4px;border-radius:5px"><div class="a" style="left:14.3px;top:1.8px;width:17.2px;height:16.8px;background:#fefefe;border-radius:1.5px"></div></div>
<div class="a" style="left:1025px;top:1200px;width:73.2px;height:4.4px;background:#3c404d;border-radius:2.2px"></div>
<div class="a" style="left:1025px;top:1196.2px;width:23px;height:12px;background:#fefefe;border-radius:6px"></div>
<div class="t" style="left:1105px;top:1195.5px;letter-spacing:.18px;word-spacing:4.6px">00:00:00 / 00:00:00</div>

<!-- Vertical Scenes dock -->
<div class="title" style="left:1239px;top:908px;width:170.7px"><div class="t" style="top:4.6px;left:45.5px;letter-spacing:0.00px">Vertical Scenes</div></div>
<svg style="left:1242px;top:914px" width="17" height="18"><use href="#close"/></svg>
<svg style="left:1262px;top:914px" width="18" height="18"><use href="#float"/></svg>
<div class="frame" style="left:1239px;top:941.5px;width:170.7px;height:279.5px;border-radius:4px"></div>
<div class="t" style="left:1254.3px;top:951.0px;letter-spacing:0.64px">Horizontal</div>
<div class="t" style="left:1254.3px;top:984.0px;letter-spacing:0.35px">Starting Soon</div>
<div class="sel" style="left:1243px;top:1009.7px;width:163.8px;height:32.6px"></div>
<div class="t" style="left:1254.3px;top:1017.0px;letter-spacing:0.01px">Facecam</div>
<div class="t" style="left:1254.3px;top:1050.0px;letter-spacing:0.45px">Testing</div>
<div class="t" style="left:1254.3px;top:1083.0px;letter-spacing:0.33px">Does this work?</div>
<div class="hl" style="left:1240px;top:1185px;width:168.7px"></div>
<svg style="left:1249.6px;top:1195.2px" width="16" height="16"><use href="#plus"/></svg>
<svg style="left:1281.3px;top:1195.2px" width="16" height="16"><use href="#minus"/></svg>
<svg style="left:1317.6px;top:1195.2px" width="16" height="16"><use href="#filter"/></svg>
<svg style="left:1354px;top:1195.2px" width="16" height="16"><use href="#up"/></svg>
<svg style="left:1396.2px;top:1195.6px" width="4.6" height="15.4" viewBox="-3 -10 6 20"><use href="#kb" x="-3" y="-10" width="6" height="20"/></svg>

<!-- Vertical Sources dock -->
<div class="title" style="left:1414.8px;top:908px;width:175.2px"><div class="t" style="top:4.6px;left:45.5px;letter-spacing:0.03px">Vertical Sources</div></div>
<svg style="left:1417.8px;top:914px" width="17" height="18"><use href="#close"/></svg>
<svg style="left:1437.8px;top:914px" width="18" height="18"><use href="#float"/></svg>
<div class="frame" style="left:1414.8px;top:941.5px;width:175.2px;height:279.5px;border-radius:4px"></div>
<div class="a" style="left:1417.5px;top:1030px;width:169.5px;height:70px;overflow:hidden">
<div class="t" id="vs1" style="left:-0.2px;top:6.3px;letter-spacing:.27px">You don't have any sources.</div>
<div class="t" id="vs2" style="left:10.2px;top:25.5px;letter-spacing:.38px">Click the + button below,</div>
<div class="t" id="vs3" style="left:-5.2px;top:44.7px;letter-spacing:.37px">or right click here to add one.</div>
</div>
<div class="hl" style="left:1415.8px;top:1185px;width:173.2px"></div>
<svg style="left:1424.7px;top:1195.2px" width="16" height="16"><use href="#plus"/></svg>
<svg style="left:1456.5px;top:1195.2px" width="16" height="16"><use href="#minus"/></svg>
<svg style="left:1493px;top:1195.2px" width="16" height="16"><use href="#filter"/></svg>
<svg style="left:1524.8px;top:1195px" width="16.4" height="16.4"><use href="#gear" fill="#fefefe"/></svg>
<svg style="left:1576.1px;top:1195.6px" width="4.6" height="15.4" viewBox="-3 -10 6 20"><use href="#kb" x="-3" y="-10" width="6" height="20"/></svg>

<!-- Controls dock -->
<div class="title" style="left:1594.5px;top:908px;width:351.5px"><div class="t" style="top:4.6px;left:25.2px;letter-spacing:0.03px">Controls</div></div>
<svg style="left:1597px;top:914px" width="18" height="18"><use href="#float"/></svg>
<div class="frame" style="left:1594.5px;top:936.5px;width:351.5px;height:284.5px;border-top:none;border-radius:0 0 4px 4px"></div>
<div class="btn" style="left:1602.3px;top:943.5px;width:335.7px;height:41px"><div class="t" style="left:0;width:335.7px;top:11.2px;letter-spacing:0.46px">Start Streaming</div></div>
<div class="btn" style="left:1602.3px;top:989px;width:335.7px;height:41px"><div class="t" style="left:0;width:335.7px;top:11.2px;letter-spacing:0.34px">Start Recording</div></div>
<div class="btn" style="left:1602.3px;top:1034.5px;width:335.7px;height:41px"><div class="t" style="left:0;width:335.7px;top:11.2px;letter-spacing:0.36px">Start Replay Buffer</div></div>
<div class="btn" style="left:1602.3px;top:1080px;width:290.5px;height:41px"><div class="t" style="left:0;width:290.5px;top:11.2px;letter-spacing:0.37px">Start Virtual Camera</div></div>
<div class="btn" style="left:1897.4px;top:1080px;width:40.6px;height:41px"></div>
<svg style="left:1909.2px;top:1092.3px" width="16.4" height="16.4"><use href="#gear" fill="#fefefe"/></svg>
<div class="btn" style="left:1602.3px;top:1125.5px;width:335.7px;height:41px"><div class="t" style="left:0;width:335.7px;top:11.2px;letter-spacing:0.65px">Studio Mode</div></div>
<div class="btn" style="left:1602.3px;top:1171px;width:335.7px;height:41px"><div class="t" style="left:0;width:335.7px;top:11.2px;letter-spacing:0.37px">Settings</div></div>

<!-- Status bar -->
<div class="a" style="left:0;top:1226px;width:1946px;height:34px;background:#272a33;border-top:1px solid #3c404d"></div>
<div class="vl" style="left:1485.3px;top:1226px;height:34px"></div>
<div class="vl" style="left:1520.2px;top:1226px;height:34px"></div>
<div class="vl" style="left:1621.5px;top:1226px;height:34px"></div>
<div class="vl" style="left:1722.7px;top:1226px;height:34px"></div>
<div class="vl" style="left:1813px;top:1226px;height:34px"></div>
<svg style="left:1494px;top:1235px" width="18" height="17" viewBox="0 0 18 17"><path d="M2 12.5V15M6.3 9.5V15M10.6 5.5V15M14.9 1.5V15" stroke="#50556a" stroke-width="2.8" stroke-linecap="round" fill="none"/></svg>
<svg style="left:1538.4px;top:1243.4px" width="1" height="1"><circle r="2.9" fill="#555a6c"/><path d="M3.2 -3.6A4.8 4.8 0 0 1 3.2 3.6M-3.2 -3.6A4.8 4.8 0 0 0 -3.2 3.6M5.2 -5.6A7.6 7.6 0 0 1 5.2 5.6M-5.2 -5.6A7.6 7.6 0 0 0 -5.2 5.6" stroke="#555a6c" stroke-width="1.3" fill="none"/></svg>
<div class="t" style="left:1559.3px;top:1234px;color:#9da0a8;letter-spacing:0.25px">00:00:00</div>
<div class="a" style="left:1631.5px;top:1235.5px;width:16px;height:16px;border-radius:50%;background:#50556a"></div>
<div class="t" style="left:1660.5px;top:1234px;color:#9da0a8;letter-spacing:0.25px">00:00:00</div>
<div class="t" style="left:1736px;top:1234px;letter-spacing:-0.17px">CPU: 9.8%</div>
<div class="t" style="left:1821.6px;top:1234px;letter-spacing:0.02px">27.10 / 30.00 FPS</div>

</body>
</html>
